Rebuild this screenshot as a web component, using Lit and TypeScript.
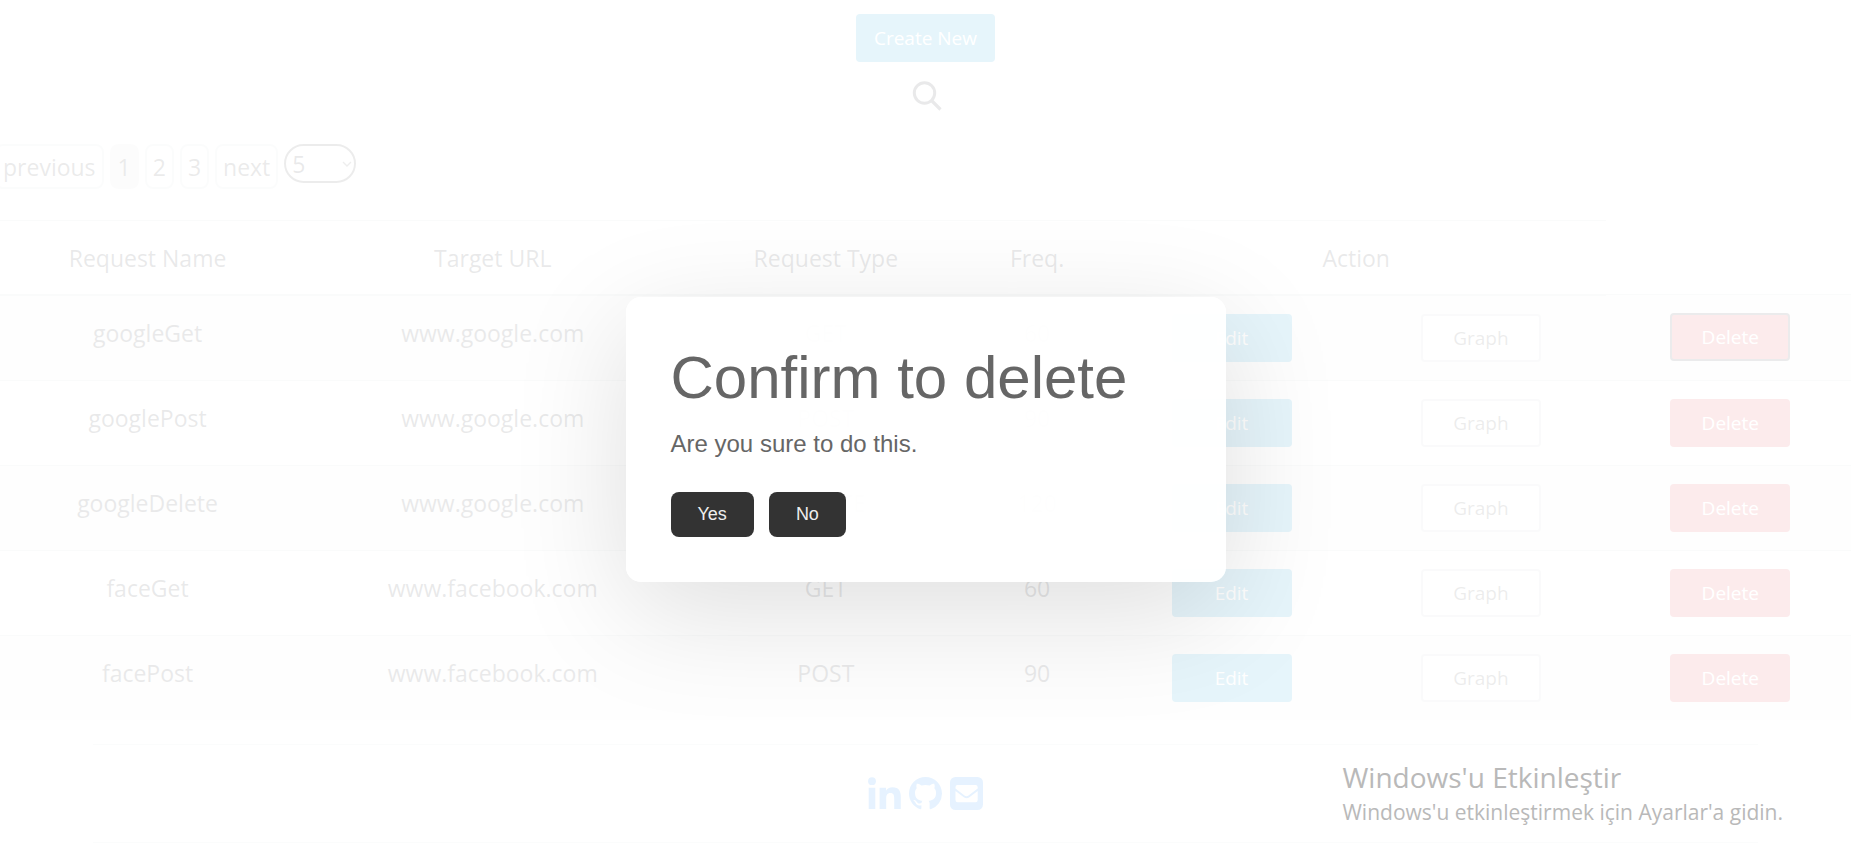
import { LitElement, html, css } from "lit";
import { customElement, state } from "lit/decorators.js";

interface RequestRow {
  name: string;
  url: string;
  type: string;
  freq: number;
}

const ROWS: RequestRow[] = [
  { name: "googleGet", url: "www.google.com", type: "GET", freq: 60 },
  { name: "googlePost", url: "www.google.com", type: "POST", freq: 90 },
  { name: "googleDelete", url: "www.google.com", type: "DELETE", freq: 120 },
  { name: "faceGet", url: "www.facebook.com", type: "GET", freq: 60 },
  { name: "facePost", url: "www.facebook.com", type: "POST", freq: 90 },
];

@customElement("app-root")
export class AppRoot extends LitElement {
  static styles = css`
    :host {
      display: block;
      min-height: 100vh;
      overflow: hidden;
      position: relative;
      background: #fff;
      color: #212529;
      font-family: "Segoe UI", "Open Sans", "Noto Sans", sans-serif;
      font-size: 23px;
      line-height: 36px;
    }
    * { box-sizing: border-box; }
    button, select { font: inherit; color: inherit; margin: 0; }
    .top {
      display: flex;
      flex-direction: column;
      align-items: center;
      gap: 17px;
      padding-top: 14px;
    }
    .btn {
      height: 48px;
      padding: 1px 16px 0;
      border: 2px solid transparent;
      border-radius: 4px;
      font-size: 19px;
      line-height: 43px;
      color: #fff;
    }
    .primary { background: #0095d0; }
    .danger { background: #d9363e; }
    .plain { background: #fff; border-color: #c8cdd2; color: #444; }
    .cell .btn { width: 120px; }
    .focused { border-color: #343a40; }
    .search { padding: 0; border: 0; background: none; line-height: 0; }
    .pager { display: flex; gap: 6px; padding-top: 29px; margin-left: -5px; align-items: flex-start; }
    .page {
      height: 45px;
      padding: 0 6px;
      border: 2px solid #d8dcdf;
      border-radius: 8px;
      background: none;
      line-height: 40px;
      color: #333;
    }
    .current { background: #e2e2e2; border-color: #e2e2e2; }
    .size {
      appearance: none;
      width: 72px;
      height: 39px;
      padding: 0 6px;
      border: 2px solid #444;
      border-radius: 20px;
      background: none;
      line-height: 34px;
    }
    .sizebox { display: grid; width: 72px; }
    .sizebox > * { grid-area: 1 / 1; }
    .sizebox svg { justify-self: end; align-self: center; margin-right: 4px; pointer-events: none; }
    .table {
      width: calc(100% + 10px);
      margin: 31px -6px 0;
      border-collapse: collapse;
      table-layout: fixed;
      text-align: center;
    }
    .head {
      height: 74px;
      padding: 2px 12px 0;
      font-weight: 400;
      border-top: 1px solid #cdd2d7;
      border-bottom: 2px solid #cdd2d7;
    }
    .c-name { width: 16.5%; }
    .c-url { width: 20.6%; }
    .c-type { width: 15.2%; }
    .c-freq { width: 7.5%; }
    .cell {
      height: 85px;
      padding: 18px 12px;
      vertical-align: top;
      border-top: 1px solid #cdd2d7;
      line-height: 39px;
    }
    .row:nth-child(odd) { background: #ededed; }
    .cell .btn { display: block; margin: 0 auto; }
    .footer { width: 90%; margin: 24px auto 0; border: solid #d8dce0; border-width: 1px 0; height: 99px; }
    .social { display: flex; justify-content: center; gap: 8px; padding-top: 32px; }
    .link { display: block; color: #007bff; line-height: 0; }
    .overlay {
      position: absolute;
      inset: 0;
      display: flex;
      align-items: center;
      justify-content: center;
      padding-top: 20px;
      background: rgba(255, 255, 255, 0.9);
    }
    .dialog {
      width: 600px;
      padding: 45px;
      border-radius: 15px;
      background: rgba(255, 255, 255, 0.95);
      box-shadow: 0 30px 116px rgba(0, 0, 0, 0.13);
      color: #666;
      font-family: Arial, "Liberation Sans", sans-serif;
      font-size: 24px;
    }
    .title { margin: 0 0 12px; font-size: 60px; font-weight: 400; line-height: 72px; }
    .actions { display: flex; gap: 15px; margin-top: 30px; }
    .answer {
      height: 45px;
      padding: 0 27px;
      border: 0;
      border-radius: 8px;
      background: #333;
      color: #eee;
      font-size: 18px;
      line-height: 43px;
    }
    .notice {
      position: absolute;
      right: 68px;
      bottom: 32px;
      color: #b9b9b9;
      font-size: 21px;
      line-height: 30px;
    }
    .notice p { margin: 0; }
    .notice .lead { font-size: 28px; line-height: 40px; }
  `;

  @state() private open = true;

  private close = () => {
    this.open = false;
  };

  private ask = () => {
    this.open = true;
  };

  render() {
    return html`
      <div class="top">
        <button class="btn primary">Create New</button>
        <button class="search" aria-label="Search">
          <svg width="32" height="36" viewBox="0 0 32 36" fill="none" stroke="#212529">
            <circle cx="14.5" cy="14" r="10.2" stroke-width="3" />
            <path d="M21.500 21.500l9 9" stroke-width="3.2" />
          </svg>
        </button>
      </div>
      <nav class="pager" aria-label="Pages">
        <button class="page">previous</button>
        <button class="page current" aria-current="page">1</button>
        <button class="page">2</button>
        <button class="page">3</button>
        <button class="page">next</button>
        <div class="sizebox">
          <select class="size" aria-label="Rows per page">
            <option>5</option>
            <option>10</option>
          </select>
          <svg width="10" height="8" viewBox="0 0 10 8" fill="none" stroke="#555" stroke-width="1.4"><path d="M1 2l4 4 4-4" /></svg>
        </div>
      </nav>
      <table class="table">
        <thead>
          <tr>
            <th class="head c-name">Request Name</th>
            <th class="head c-url">Target URL</th>
            <th class="head c-type">Request Type</th>
            <th class="head c-freq">Freq.</th>
            <th class="head" colspan="2">Action</th>
            <td></td>
          </tr>
        </thead>
        <tbody>
          ${ROWS.map(
            (r, i) => html`
              <tr class="row">
                <td class="cell">${r.name}</td>
                <td class="cell">${r.url}</td>
                <td class="cell">${r.type}</td>
                <td class="cell">${r.freq}</td>
                <td class="cell"><button class="btn primary">Edit</button></td>
                <td class="cell"><button class="btn plain">Graph</button></td>
                <td class="cell">
                  <button class="btn danger ${i === 0 ? "focused" : ""}" @click=${this.ask}>Delete</button>
                </td>
              </tr>
            `
          )}
        </tbody>
      </table>
      <footer class="footer">
        <div class="social">
          <a class="link" href="#linkedin" aria-label="LinkedIn">
            <svg width="33" height="33" viewBox="0 0 33 33" fill="currentColor">
              <circle cx="4" cy="4.2" r="3.9" />
              <path d="M.7 10.8h6.600V32H.7zM11.600 10.800H18v2.900c1.200-2 3.300-3.400 6.500-3.400 6.600 0 8.300 4 8.300 10V32h-6.600V21.700c0-3.300-.5-5.700-3.800-5.700s-4.200 2.400-4.200 5.600V32h-6.600z" />
            </svg>
          </a>
          <a class="link" href="#github" aria-label="GitHub">
            <svg width="33" height="33" viewBox="0 0 16 16" fill="currentColor">
              <path d="M8 0C3.580 0 0 3.580 0 8c0 3.540 2.290 6.530 5.470 7.590.4.070.55-.17.55-.38 0-.19-.01-.82-.01-1.490-2.010.37-2.530-.49-2.690-.94-.09-.23-.48-.94-.82-1.130-.28-.15-.68-.52-.01-.53.63-.01 1.080.58 1.230.82.72 1.210 1.870.87 2.330.66.07-.52.28-.87.51-1.070-1.780-.2-3.640-.89-3.640-3.950 0-.87.31-1.590.82-2.150-.08-.2-.36-1.020.08-2.120 0 0 .67-.21 2.200.82.64-.18 1.320-.27 2-.27s1.360.09 2 .27c1.530-1.040 2.200-.82 2.200-.82.44 1.100.16 1.920.08 2.120.51.56.82 1.270.82 2.150 0 3.070-1.870 3.750-3.650 3.950.29.25.54.73.54 1.480 0 1.070-.01 1.930-.01 2.200 0 .21.15.46.55.38A8.010 8.010 0 0 0 16 8c0-4.420-3.580-8-8-8z" />
            </svg>
          </a>
          <a class="link" href="#mail" aria-label="Mail">
            <svg width="33" height="33" viewBox="0 0 33 33">
              <rect width="33" height="33" rx="5.500" fill="currentColor" />
              <path d="M8 8h17.500a2.200 2.200 0 0 1 2.200 2.200v1.300l-9.200 7c-1.300 1-2.700 1-4 0l-9-7v-1.300A2.200 2.200 0 0 1 8 8z" fill="#fff" />
              <path d="M5.500 14l8.300 6.300c1.800 1.400 3.800 1.400 5.600 0l8.300-6.300v9a2.200 2.200 0 0 1-2.200 2.200H7.700A2.200 2.200 0 0 1 5.500 23z" fill="#fff" />
            </svg>
          </a>
        </div>
      </footer>
      ${this.open
        ? html`<div class="overlay">
            <div class="dialog" role="alertdialog" aria-labelledby="t" aria-describedby="d">
              <h1 class="title" id="t">Confirm to delete</h1>
              <div id="d">Are you sure to do this.</div>
              <div class="actions">
                <button class="answer" @click=${this.close}>Yes</button>
                <button class="answer" @click=${this.close}>No</button>
              </div>
            </div>
          </div>`
        : ""}
      <aside class="notice">
        <p class="lead">Windows'u Etkinleştir</p>
        <p>Windows'u etkinleştirmek için Ayarlar'a gidin.</p>
      </aside>
    `;
  }
}
